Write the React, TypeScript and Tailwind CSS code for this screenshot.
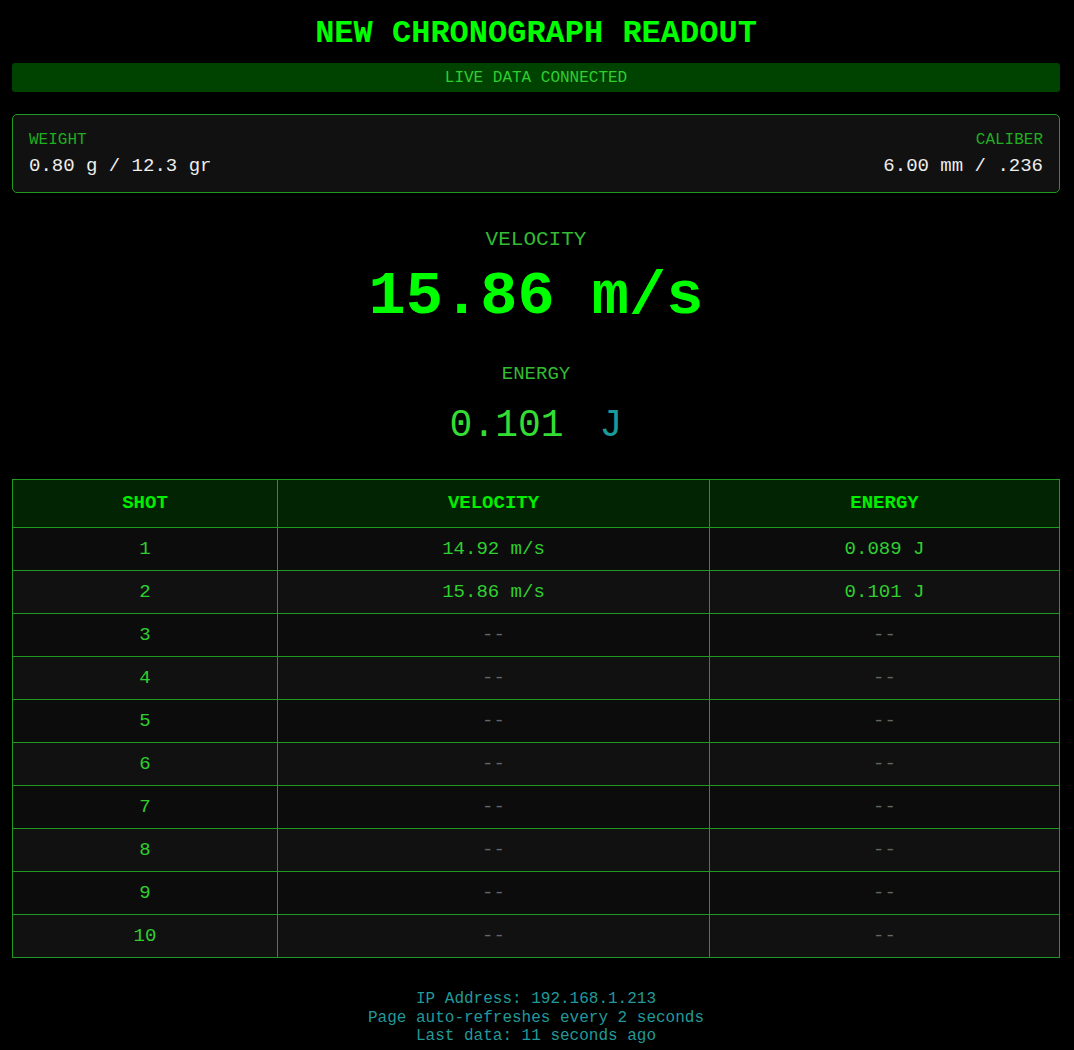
import React from 'react';

type Shot = { n: number; velocity?: string; energy?: string };

const shots: Shot[] = [
  { n: 1, velocity: '14.92 m/s', energy: '0.089 J' },
  { n: 2, velocity: '15.86 m/s', energy: '0.101 J' },
  { n: 3 },
  { n: 4 },
  { n: 5 },
  { n: 6 },
  { n: 7 },
  { n: 8 },
  { n: 9 },
  { n: 10 },
];

function Dash() {
  return <span className="text-[#666666]">--</span>;
}

export default function App() {
  return (
    <div
      className="min-h-[1050px] bg-black pl-3 pr-[14px] pt-[16px] text-[#2fcf2f]"
      style={{ fontFamily: '"Liberation Mono", "Courier New", monospace' }}
    >
      <h1 className="text-center text-[32px] font-bold leading-[36px] text-[#00ff00]">
        NEW CHRONOGRAPH READOUT
      </h1>

      <div className="mt-[11px] flex h-[29px] items-center justify-center rounded-[3px] bg-[#004200] text-[16px] leading-[18px] text-[#2fcf2f]">
        LIVE DATA CONNECTED
      </div>

      <div className="mt-[22px] flex items-start justify-between rounded-[5px] border border-[#1f9a1f] bg-[#111111] px-4 pb-[15px] pt-[16px]">
        <div>
          <div className="text-[16px] leading-[18px] text-[#1fae1f]">WEIGHT</div>
          <div className="mt-[6px] text-[19px] leading-[22px] text-[#eeeeee]">0.80 g / 12.3 gr</div>
        </div>
        <div className="text-right">
          <div className="text-[16px] leading-[18px] text-[#1fae1f]">CALIBER</div>
          <div className="mt-[6px] text-[19px] leading-[22px] text-[#eeeeee]">6.00 mm / .236</div>
        </div>
      </div>

      <div className="mt-[35px] text-center">
        <div className="text-[21px] leading-[24px] text-[#33bb33]">VELOCITY</div>
        <div className="mt-[10px] text-[62px] font-bold leading-[70px] text-[#00ff00]">15.86 m/s</div>
        <div className="mt-[31px] text-[19px] leading-[22px] text-[#33bb33]">ENERGY</div>
        <div className="mt-[19px] flex items-baseline justify-center text-[38px] leading-[43px]">
          <span className="text-[#33dd33]">0.101</span>
          <span className="ml-[36px] text-[#1a9a9a]">J</span>
        </div>
      </div>

      <table className="mt-[32px] w-full border-collapse text-center text-[19px]">
        <thead>
          <tr className="bg-[#022402]">
            <th className="w-[265px] border border-[#1f9a1f] py-[13px] font-bold leading-[21px] text-[#00ee00]">SHOT</th>
            <th className="w-[432px] border border-[#1f9a1f] py-[13px] font-bold leading-[21px] text-[#00ee00]">VELOCITY</th>
            <th className="border border-[#1f9a1f] py-[13px] font-bold leading-[21px] text-[#00ee00]">ENERGY</th>
          </tr>
        </thead>
        <tbody>
          {shots.map((s) => (
            <tr key={s.n} className={s.n % 2 === 1 ? 'bg-[#0c0c0c]' : 'bg-[#111111]'}>
              <td className="border border-[#1f9a1f] py-[10px] leading-[22px] text-[#2fcf2f]">{s.n}</td>
              <td className="border border-[#1f9a1f] py-[10px] leading-[22px] text-[#2fcf2f]">
                {s.velocity ?? <Dash />}
              </td>
              <td className="border border-[#1f9a1f] py-[10px] leading-[22px] text-[#2fcf2f]">
                {s.energy ?? <Dash />}
              </td>
            </tr>
          ))}
        </tbody>
      </table>

      <div className="mt-[32px] text-center text-[16px] leading-[18.5px] text-[#229999]">
        <div>IP Address: 192.168.1.213</div>
        <div>Page auto-refreshes every 2 seconds</div>
        <div>Last data: 11 seconds ago</div>
      </div>
    </div>
  );
}
